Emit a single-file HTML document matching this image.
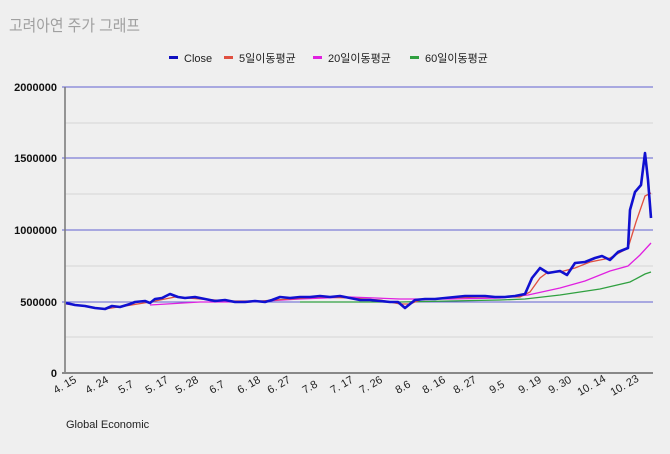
<!DOCTYPE html>
<html><head><meta charset="utf-8"><style>
body{margin:0;background:#efefef;width:670px;height:449px;overflow:hidden;font-family:"Liberation Sans","Noto Sans CJK KR",sans-serif}
</style></head><body>
<svg width="670" height="449" viewBox="0 0 670 449" xmlns="http://www.w3.org/2000/svg" font-family="Liberation Sans, Noto Sans CJK KR, sans-serif">
<rect width="670" height="449" fill="#efefef"/>
<text x="9" y="31" font-size="16" fill="#a0a0a0" textLength="131" lengthAdjust="spacingAndGlyphs">고려아연  주가 그래프</text>
<g font-size="11" fill="#222">
<rect x="169" y="56" width="9" height="3" fill="#1010c0"/><text x="184" y="62">Close</text>
<rect x="224" y="56" width="9" height="3" fill="#e05040"/><text x="239" y="62">5일이동평균</text>
<rect x="313" y="56" width="9" height="3" fill="#e020e0"/><text x="328" y="62">20일이동평균</text>
<rect x="410" y="56" width="9" height="3" fill="#30a040"/><text x="425" y="62">60일이동평균</text>
</g>
<g stroke="#d6d6d6" stroke-width="1"><line x1="65" y1="123" x2="653" y2="123"/><line x1="65" y1="194" x2="653" y2="194"/><line x1="65" y1="266" x2="653" y2="266"/><line x1="65" y1="337" x2="653" y2="337"/></g>
<g stroke="#6060d0" stroke-width="1"><line x1="62" y1="87" x2="653" y2="87"/><line x1="62" y1="158" x2="653" y2="158"/><line x1="62" y1="230" x2="653" y2="230"/><line x1="62" y1="302" x2="653" y2="302"/></g>
<line x1="65" y1="87" x2="65" y2="374" stroke="#777" stroke-width="1.5"/>
<line x1="62" y1="373" x2="653" y2="373" stroke="#888" stroke-width="2"/>
<g font-size="11" font-weight="bold" fill="#111" text-anchor="end">
<text x="57" y="91">2000000</text><text x="57" y="162">1500000</text><text x="57" y="234">1000000</text><text x="57" y="306">500000</text><text x="57" y="377">0</text></g>
<polyline fill="none" stroke="#30a040" stroke-width="1.3" points="300,302 400,302 450,301 500,300 525,299 560,295 600,289 630,282 645,274 651,272"/>
<polyline fill="none" stroke="#e020e0" stroke-width="1.3" points="150,305 200,302 250,302 300,299 350,297 400,299 450,299 500,298 528,295 560,288 585,281 610,271 628,266 640,255 651,243"/>
<polyline fill="none" stroke="#e05040" stroke-width="1.3" points="66,304 90,307 105,309 125,306 150,302 175,297 200,299 230,301 260,301 290,299 320,297 350,298 380,300 400,304 410,304 420,300 450,298 480,297 520,297 530,292 540,278 548,272 560,272 575,268 590,262 610,258 628,248 636,222 645,196 651,193"/>
<polyline fill="none" stroke="#1010d0" stroke-width="2.6" stroke-linejoin="round" points="66,303 75,305 85,306 95,308 105,309 112,306 120,307 130,304 135,302 145,301 150,303 155,299 162,298 170,294 178,297 185,298 195,297 205,299 215,301 225,300 235,302 245,302 255,301 265,302 272,300 280,297 290,298 300,297 310,297 320,296 330,297 340,296 350,298 360,300 370,300 380,301 390,302 398,302 405,308 410,304 415,300 425,299 435,299 445,298 455,297 465,296 475,296 485,296 495,297 505,297 515,296 525,294 532,278 540,268 548,273 560,271 567,275 575,263 585,262 595,258 602,256 610,260 618,252 628,248 630,210 635,192 641,185 645,153 648,180 651,218"/>
<g font-size="11" fill="#222">
<text transform="translate(56,394) rotate(-30)">4. 15</text>
<text transform="translate(88,394) rotate(-30)">4. 24</text>
<text transform="translate(121,394) rotate(-30)">5.7</text>
<text transform="translate(148,394) rotate(-30)">5. 17</text>
<text transform="translate(178,394) rotate(-30)">5. 28</text>
<text transform="translate(212,394) rotate(-30)">6.7</text>
<text transform="translate(240,394) rotate(-30)">6. 18</text>
<text transform="translate(270,394) rotate(-30)">6. 27</text>
<text transform="translate(305,394) rotate(-30)">7.8</text>
<text transform="translate(333,394) rotate(-30)">7. 17</text>
<text transform="translate(362,394) rotate(-30)">7. 26</text>
<text transform="translate(398,394) rotate(-30)">8.6</text>
<text transform="translate(425,394) rotate(-30)">8. 16</text>
<text transform="translate(456,394) rotate(-30)">8. 27</text>
<text transform="translate(492,394) rotate(-30)">9.5</text>
<text transform="translate(521,394) rotate(-30)">9. 19</text>
<text transform="translate(551,394) rotate(-30)">9. 30</text>
<text transform="translate(580,396) rotate(-30)">10. 14</text>
<text transform="translate(613,396) rotate(-30)">10. 23</text>
</g>
<text x="66" y="428" font-size="11" fill="#222">Global Economic</text>
</svg>
</body></html>
